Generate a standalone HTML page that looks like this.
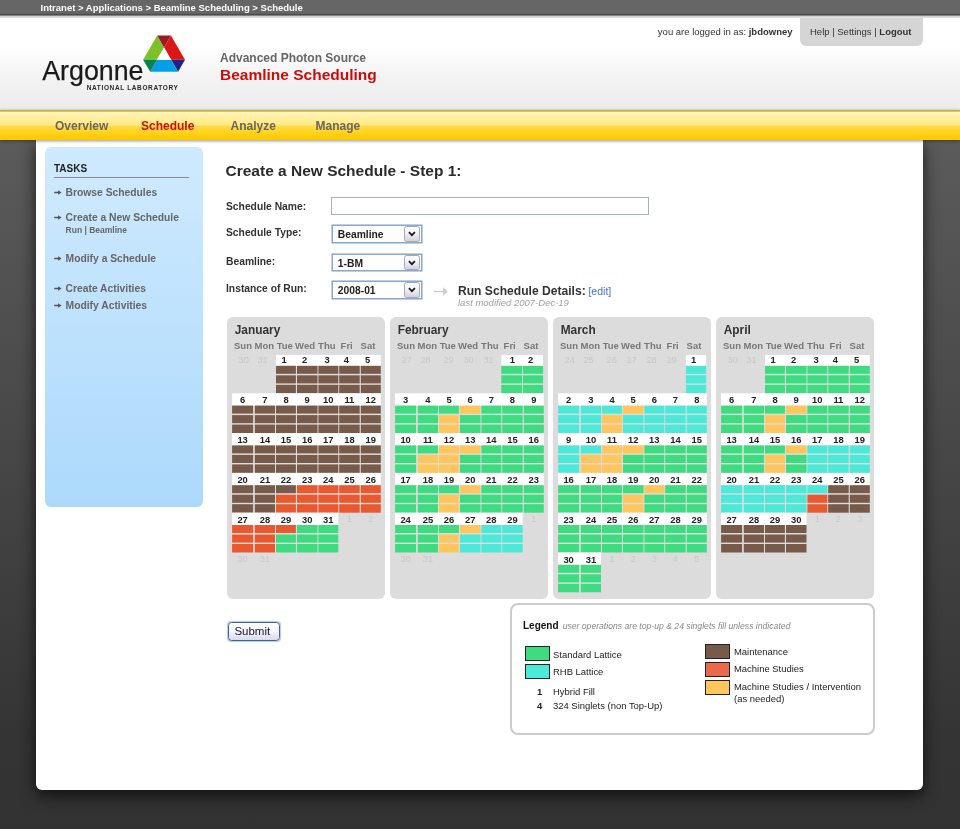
<!DOCTYPE html>
<html lang="en">
<head>
<meta charset="utf-8">
<title>Beamline Scheduling - Create a New Schedule</title>
<style>
*{box-sizing:border-box;margin:0;padding:0}
html,body{width:960px;height:829px;overflow:hidden}
body{font-family:"Liberation Sans",sans-serif;font-size:11px;color:#333;
 background:linear-gradient(to bottom,#5e5e5e 0px,#5b5b5b 140px,#343434 740px,#323232 829px);position:relative}
.abs{position:absolute}
#wrap{position:absolute;left:0;top:0;width:960px;height:829px;will-change:transform}
#topbar{position:absolute;left:0;top:0;width:960px;height:18px;z-index:2;background:linear-gradient(to bottom,#666 0,#666 13px,#606060 13px,#606060 14px,#4c4c4c 14px,#4c4c4c 15px,#828282 15px,#828282 16px,#d0d0d0 16px,#d0d0d0 17px,#dedede 17px,#dedede 18px)}
#topbar span{position:absolute;left:40.5px;top:0.7px;font-size:9.5px;font-weight:bold;color:#fff;line-height:13px;white-space:nowrap}
#header{position:absolute;left:0;top:17px;width:960px;height:93px;background:linear-gradient(to bottom,#fff 0,#fff 29px,#f4f4f4 58px,#ebebeb 93px)}
#nav{position:absolute;left:0;top:110px;width:960px;height:29.5px;
 background:linear-gradient(to bottom,#d3b340 0,#c9a728 1px,#e8cf6a 1.7px,#fff6c2 2.3px,#fff2b0 4px,#ffe981 15.3px,#ffdb42 16px,#ffd425 22px,#ffcb06 27px,#fdc900 29.5px);z-index:3;box-shadow:0 1px 3px rgba(10,15,50,.45)}
#nav span{position:absolute;top:9.3px;font-size:12px;font-weight:bold;color:#666;line-height:15px}
#panel{position:absolute;left:36.3px;top:139.5px;width:887px;height:650.2px;background:#fff;border-radius:0 0 6px 6px;
 box-shadow:0 5px 16px rgba(0,0,0,.72)}
#side{position:absolute;left:45px;top:147px;width:158px;height:360px;border-radius:6px;
 background:linear-gradient(to bottom,#cfeaff 0,#acd9fb 100%)}
#side .t{position:absolute;left:20.6px;font-weight:bold;color:#666;font-size:10.3px;line-height:13px;white-space:nowrap}
#side .t .ar{position:absolute;left:-11.6px;top:4.1px}
.cal{position:absolute;top:317px;width:158px;height:281.7px;background:#dcdcdc;border-radius:6px}
.mn{position:absolute;left:7.7px;top:6.3px;font-size:11.9px;font-weight:bold;color:#333;line-height:15px}
.dow{position:absolute;left:5px;top:23px;width:149px;height:12px}
.dow span{position:absolute;top:0;font-size:9.5px;font-weight:bold;color:#777;line-height:12px;white-space:nowrap}
.cg{position:absolute;left:0;top:0}
.nm b{position:absolute;width:20px;height:12.4px;font-size:9.4px;line-height:13.3px;text-align:center;color:#222;white-space:nowrap}
.nm b.g{color:#c8c8c8;font-weight:normal;font-size:9.2px;line-height:13.6px}
.lbl{position:absolute;left:226px;font-weight:bold;font-size:10.3px;color:#333;line-height:13px;white-space:nowrap}
.sel{position:absolute;left:331px;width:92px;height:19.5px;border:1px solid #bccfe6;background:#fff;box-shadow:inset 0 0 0 1px #8aa8cd;border-radius:1px}
.sel span{position:absolute;left:5.8px;top:3.2px;font-weight:bold;font-size:10.3px;line-height:13px;color:#222}
.sel em{position:absolute;left:71.8px;top:1px;width:16.5px;height:15.5px;border:1px solid #a9a9ae;border-radius:2.5px;
 background:linear-gradient(to bottom,#ffffff 0,#f1f2f7 45%,#cfd2e4 100%)}
.sel em svg{position:absolute;left:3.6px;top:4.2px}
</style>
</head>
<body>
<div id="wrap">
<div id="topbar"><span>Intranet &gt; Applications &gt; Beamline Scheduling &gt; Schedule</span></div>
<div id="header">
 <div class="abs" style="left:42.2px;top:39.2px;font-size:26.8px;line-height:30px;letter-spacing:0;color:#1a1a1a;-webkit-text-stroke:0.25px #1a1a1a;white-space:nowrap">Argonne</div>
 <div class="abs" style="left:86.7px;top:66.7px;font-size:6.5px;line-height:8px;font-weight:bold;letter-spacing:0.63px;color:#2a2a2a;white-space:nowrap">NATIONAL LABORATORY</div>
 <svg class="abs" style="left:140px;top:15px" width="50" height="45" viewBox="140 32 50 45">
  <polygon points="157.2,35.6 164.1,47.4 156.9,59.75 143.1,59.75" fill="#7dc12a"/>
  <polygon points="157.2,35.6 170.9,35.6 164.1,47.4" fill="#9c1a28"/>
  <polygon points="170.9,35.6 185,59.75 171.1,59.75 164.1,47.4" fill="#dc1616"/>
  <polygon points="185,59.75 178.1,71.75 171.1,59.75" fill="#1c2484"/>
  <polygon points="156.9,59.75 171.1,59.75 178.1,71.75 150.3,71.75" fill="#009fe8"/>
  <polygon points="143.1,59.75 156.9,59.75 150.3,71.75" fill="#04824c"/>
  <polygon points="164.1,47.4 171.1,59.75 156.9,59.75" fill="#ffffff"/>
 </svg>
 <div class="abs" style="left:220px;top:33.5px;font-size:12px;font-weight:bold;color:#666;line-height:15px;white-space:nowrap">Advanced Photon Source</div>
 <div class="abs" style="left:220px;top:48px;font-size:15.5px;font-weight:bold;color:#cb0d0a;line-height:19px;white-space:nowrap">Beamline Scheduling</div>
 <div class="abs" style="right:167.5px;top:7.8px;font-size:9.5px;color:#333;line-height:13px;white-space:nowrap">you are logged in as: <b>jbdowney</b></div>
 <div class="abs" style="left:800px;top:0;width:123px;height:29px;background:#d5d5d5;border-radius:0 0 6px 6px"></div>
 <div class="abs" style="left:810px;top:7.8px;font-size:9.5px;color:#333;line-height:13px;white-space:nowrap">Help | Settings | <b>Logout</b></div>
</div>
<div class="abs" style="left:0;top:109px;width:960px;height:1px;background:#e3e6f0"></div>
<div id="nav">
 <span style="left:55px">Overview</span>
 <span style="left:141px;color:#cb0d0a">Schedule</span>
 <span style="left:230.5px">Analyze</span>
 <span style="left:315.5px">Manage</span>
</div>
<div id="panel"></div>
<div id="side">
 <div class="t" style="top:15px;left:9px;color:#222;font-size:10px">TASKS</div>
 <div class="abs" style="left:9px;top:29.6px;width:135px;height:1.2px;background:#8c8c8c"></div>
 <div class="t" style="top:39px"><svg class="ar" width="8" height="5" viewBox="0 0 8 5"><path d="M0.2 2.5H5" stroke="#555" stroke-width="1.5" fill="none"/><path d="M4.2 0.2L7.5 2.5L4.2 4.8Z" fill="#505050"/></svg>Browse Schedules</div>
 <div class="t" style="top:64px"><svg class="ar" width="8" height="5" viewBox="0 0 8 5"><path d="M0.2 2.5H5" stroke="#555" stroke-width="1.5" fill="none"/><path d="M4.2 0.2L7.5 2.5L4.2 4.8Z" fill="#505050"/></svg>Create a New Schedule</div>
 <div class="t" style="top:78px;left:20.6px;font-size:8.5px;line-height:11px">Run | Beamline</div>
 <div class="t" style="top:105px"><svg class="ar" width="8" height="5" viewBox="0 0 8 5"><path d="M0.2 2.5H5" stroke="#555" stroke-width="1.5" fill="none"/><path d="M4.2 0.2L7.5 2.5L4.2 4.8Z" fill="#505050"/></svg>Modify a Schedule</div>
 <div class="t" style="top:134.7px"><svg class="ar" width="8" height="5" viewBox="0 0 8 5"><path d="M0.2 2.5H5" stroke="#555" stroke-width="1.5" fill="none"/><path d="M4.2 0.2L7.5 2.5L4.2 4.8Z" fill="#505050"/></svg>Create Activities</div>
 <div class="t" style="top:152px"><svg class="ar" width="8" height="5" viewBox="0 0 8 5"><path d="M0.2 2.5H5" stroke="#555" stroke-width="1.5" fill="none"/><path d="M4.2 0.2L7.5 2.5L4.2 4.8Z" fill="#505050"/></svg>Modify Activities</div>
</div>

<div class="abs" style="left:225.5px;top:161px;font-size:15.5px;font-weight:bold;color:#2b2b2b;line-height:20px;white-space:nowrap">Create a New Schedule - Step 1:</div>
<div class="lbl" style="top:200px">Schedule Name:</div>
<div class="lbl" style="top:226px">Schedule Type:</div>
<div class="lbl" style="top:255px">Beamline:</div>
<div class="lbl" style="top:282px">Instance of Run:</div>
<div class="abs" style="left:331px;top:197px;width:318px;height:18.3px;border:1px solid #a3b2c4;background:#fff"></div>
<div class="sel" style="top:224px"><span>Beamline</span><em><svg width="8" height="6" viewBox="0 0 8 6"><path d="M0.9 1.1L3.9 4.2L6.9 1.1" stroke="#1a1a1a" stroke-width="1.7" fill="none"/></svg></em></div>
<div class="sel" style="top:252.8px"><span>1-BM</span><em><svg width="8" height="6" viewBox="0 0 8 6"><path d="M0.9 1.1L3.9 4.2L6.9 1.1" stroke="#1a1a1a" stroke-width="1.7" fill="none"/></svg></em></div>
<div class="sel" style="top:280.3px"><span>2008-01</span><em><svg width="8" height="6" viewBox="0 0 8 6"><path d="M0.9 1.1L3.9 4.2L6.9 1.1" stroke="#1a1a1a" stroke-width="1.7" fill="none"/></svg></em></div>
<svg class="abs" style="left:433px;top:287px" width="16" height="9" viewBox="0 0 16 9"><path d="M0.9 4.5H10.6" stroke="#c9c9c9" stroke-width="1.2" fill="none"/><path d="M10.2 0.2L14.8 4.5L10.2 8.9Z" fill="#cbcbcb"/></svg>
<div class="abs" style="left:458px;top:283.4px;font-size:12.1px;font-weight:bold;color:#333;line-height:16px;white-space:nowrap">Run Schedule Details: <span style="font-size:10.5px;font-weight:normal;color:#3d72d8;margin-left:-0.6px">[edit]</span></div>
<div class="abs" style="left:458px;top:297.4px;font-size:9.5px;font-style:italic;color:#a2a2a2;line-height:11px;white-space:nowrap">last modified 2007-Dec-19</div>

<div class="cal" style="left:227px">
<div class="mn">January</div>
<div class="dow">
<span style="left:2px">Sun</span>
<span style="left:22.6px">Mon</span>
<span style="left:44.7px">Tue</span>
<span style="left:63.1px">Wed</span>
<span style="left:86.1px">Thu</span>
<span style="left:108.6px">Fri</span>
<span style="left:128.6px">Sat</span>
</div>
<svg class="cg" width="158" height="282" viewBox="0 0 158 282"><rect x="49.0" y="37.9" width="104.8" height="11.0" fill="#fff"/><rect x="49.0" y="48.8" width="19.9" height="8.0" fill="#775a4a"/><rect x="49.0" y="58.3" width="19.9" height="8.1" fill="#775a4a"/><rect x="49.0" y="67.8" width="19.9" height="8.5" fill="#775a4a"/><rect x="70.0" y="48.8" width="20.5" height="8.0" fill="#775a4a"/><rect x="70.0" y="58.3" width="20.5" height="8.1" fill="#775a4a"/><rect x="70.0" y="67.8" width="20.5" height="8.5" fill="#775a4a"/><rect x="91.4" y="48.8" width="19.9" height="8.0" fill="#775a4a"/><rect x="91.4" y="58.3" width="19.9" height="8.1" fill="#775a4a"/><rect x="91.4" y="67.8" width="19.9" height="8.5" fill="#775a4a"/><rect x="112.2" y="48.8" width="20.5" height="8.0" fill="#775a4a"/><rect x="112.2" y="58.3" width="20.5" height="8.1" fill="#775a4a"/><rect x="112.2" y="67.8" width="20.5" height="8.5" fill="#775a4a"/><rect x="133.8" y="48.8" width="20.0" height="8.0" fill="#775a4a"/><rect x="133.8" y="58.3" width="20.0" height="8.1" fill="#775a4a"/><rect x="133.8" y="67.8" width="20.0" height="8.5" fill="#775a4a"/><rect x="5.1" y="76.3" width="148.7" height="12.4" fill="#fff"/><rect x="5.1" y="88.6" width="21.0" height="8.0" fill="#775a4a"/><rect x="5.1" y="98.1" width="21.0" height="8.1" fill="#775a4a"/><rect x="5.1" y="107.6" width="21.0" height="8.5" fill="#775a4a"/><rect x="27.8" y="88.6" width="20.2" height="8.0" fill="#775a4a"/><rect x="27.8" y="98.1" width="20.2" height="8.1" fill="#775a4a"/><rect x="27.8" y="107.6" width="20.2" height="8.5" fill="#775a4a"/><rect x="49.0" y="88.6" width="19.9" height="8.0" fill="#775a4a"/><rect x="49.0" y="98.1" width="19.9" height="8.1" fill="#775a4a"/><rect x="49.0" y="107.6" width="19.9" height="8.5" fill="#775a4a"/><rect x="70.0" y="88.6" width="20.5" height="8.0" fill="#775a4a"/><rect x="70.0" y="98.1" width="20.5" height="8.1" fill="#775a4a"/><rect x="70.0" y="107.6" width="20.5" height="8.5" fill="#775a4a"/><rect x="91.4" y="88.6" width="19.9" height="8.0" fill="#775a4a"/><rect x="91.4" y="98.1" width="19.9" height="8.1" fill="#775a4a"/><rect x="91.4" y="107.6" width="19.9" height="8.5" fill="#775a4a"/><rect x="112.2" y="88.6" width="20.5" height="8.0" fill="#775a4a"/><rect x="112.2" y="98.1" width="20.5" height="8.1" fill="#775a4a"/><rect x="112.2" y="107.6" width="20.5" height="8.5" fill="#775a4a"/><rect x="133.8" y="88.6" width="20.0" height="8.0" fill="#775a4a"/><rect x="133.8" y="98.1" width="20.0" height="8.1" fill="#775a4a"/><rect x="133.8" y="107.6" width="20.0" height="8.5" fill="#775a4a"/><rect x="5.1" y="116.1" width="148.7" height="12.4" fill="#fff"/><rect x="5.1" y="128.4" width="21.0" height="8.0" fill="#775a4a"/><rect x="5.1" y="137.9" width="21.0" height="8.1" fill="#775a4a"/><rect x="5.1" y="147.4" width="21.0" height="8.5" fill="#775a4a"/><rect x="27.8" y="128.4" width="20.2" height="8.0" fill="#775a4a"/><rect x="27.8" y="137.9" width="20.2" height="8.1" fill="#775a4a"/><rect x="27.8" y="147.4" width="20.2" height="8.5" fill="#775a4a"/><rect x="49.0" y="128.4" width="19.9" height="8.0" fill="#775a4a"/><rect x="49.0" y="137.9" width="19.9" height="8.1" fill="#775a4a"/><rect x="49.0" y="147.4" width="19.9" height="8.5" fill="#775a4a"/><rect x="70.0" y="128.4" width="20.5" height="8.0" fill="#775a4a"/><rect x="70.0" y="137.9" width="20.5" height="8.1" fill="#775a4a"/><rect x="70.0" y="147.4" width="20.5" height="8.5" fill="#775a4a"/><rect x="91.4" y="128.4" width="19.9" height="8.0" fill="#775a4a"/><rect x="91.4" y="137.9" width="19.9" height="8.1" fill="#775a4a"/><rect x="91.4" y="147.4" width="19.9" height="8.5" fill="#775a4a"/><rect x="112.2" y="128.4" width="20.5" height="8.0" fill="#775a4a"/><rect x="112.2" y="137.9" width="20.5" height="8.1" fill="#775a4a"/><rect x="112.2" y="147.4" width="20.5" height="8.5" fill="#775a4a"/><rect x="133.8" y="128.4" width="20.0" height="8.0" fill="#775a4a"/><rect x="133.8" y="137.9" width="20.0" height="8.1" fill="#775a4a"/><rect x="133.8" y="147.4" width="20.0" height="8.5" fill="#775a4a"/><rect x="5.1" y="155.9" width="148.7" height="12.4" fill="#fff"/><rect x="5.1" y="168.2" width="21.0" height="8.0" fill="#775a4a"/><rect x="5.1" y="177.7" width="21.0" height="8.1" fill="#775a4a"/><rect x="5.1" y="187.2" width="21.0" height="8.5" fill="#775a4a"/><rect x="27.8" y="168.2" width="20.2" height="8.0" fill="#775a4a"/><rect x="27.8" y="177.7" width="20.2" height="8.1" fill="#775a4a"/><rect x="27.8" y="187.2" width="20.2" height="8.5" fill="#775a4a"/><rect x="49.0" y="168.2" width="19.9" height="8.0" fill="#775a4a"/><rect x="49.0" y="177.7" width="19.9" height="8.1" fill="#ea5830"/><rect x="49.0" y="187.2" width="19.9" height="8.5" fill="#ea5830"/><rect x="70.0" y="168.2" width="20.5" height="8.0" fill="#ea5830"/><rect x="70.0" y="177.7" width="20.5" height="8.1" fill="#ea5830"/><rect x="70.0" y="187.2" width="20.5" height="8.5" fill="#ea5830"/><rect x="91.4" y="168.2" width="19.9" height="8.0" fill="#ea5830"/><rect x="91.4" y="177.7" width="19.9" height="8.1" fill="#ea5830"/><rect x="91.4" y="187.2" width="19.9" height="8.5" fill="#ea5830"/><rect x="112.2" y="168.2" width="20.5" height="8.0" fill="#ea5830"/><rect x="112.2" y="177.7" width="20.5" height="8.1" fill="#ea5830"/><rect x="112.2" y="187.2" width="20.5" height="8.5" fill="#ea5830"/><rect x="133.8" y="168.2" width="20.0" height="8.0" fill="#ea5830"/><rect x="133.8" y="177.7" width="20.0" height="8.1" fill="#ea5830"/><rect x="133.8" y="187.2" width="20.0" height="8.5" fill="#ea5830"/><rect x="5.1" y="195.7" width="106.2" height="12.4" fill="#fff"/><rect x="5.1" y="208.0" width="21.0" height="8.0" fill="#ea5830"/><rect x="5.1" y="217.5" width="21.0" height="8.1" fill="#ea5830"/><rect x="5.1" y="227.0" width="21.0" height="8.5" fill="#ea5830"/><rect x="27.8" y="208.0" width="20.2" height="8.0" fill="#ea5830"/><rect x="27.8" y="217.5" width="20.2" height="8.1" fill="#ea5830"/><rect x="27.8" y="227.0" width="20.2" height="8.5" fill="#ea5830"/><rect x="49.0" y="208.0" width="19.9" height="8.0" fill="#ea5830"/><rect x="49.0" y="217.5" width="19.9" height="8.1" fill="#3fdb80"/><rect x="49.0" y="227.0" width="19.9" height="8.5" fill="#3fdb80"/><rect x="70.0" y="208.0" width="20.5" height="8.0" fill="#3fdb80"/><rect x="70.0" y="217.5" width="20.5" height="8.1" fill="#3fdb80"/><rect x="70.0" y="227.0" width="20.5" height="8.5" fill="#3fdb80"/><rect x="91.4" y="208.0" width="19.9" height="8.0" fill="#3fdb80"/><rect x="91.4" y="217.5" width="19.9" height="8.1" fill="#3fdb80"/><rect x="91.4" y="227.0" width="19.9" height="8.5" fill="#3fdb80"/></svg>
<div class="nm"><b class="g" style="left:6.7px;top:36.5px">30</b><b class="g" style="left:25.5px;top:36.5px">31</b><b style="left:47.2px;top:35.5px">1</b><b style="left:67.5px;top:35.5px">2</b><b style="left:90.2px;top:35.5px">3</b><b style="left:109.3px;top:35.5px">4</b><b style="left:130.7px;top:35.5px">5</b><b style="left:5.6px;top:76.3px">6</b><b style="left:27.9px;top:76.3px">7</b><b style="left:49.0px;top:76.3px">8</b><b style="left:70.2px;top:76.3px">9</b><b style="left:91.3px;top:76.3px">10</b><b style="left:112.4px;top:76.3px">11</b><b style="left:133.8px;top:76.3px">12</b><b style="left:5.6px;top:116.1px">13</b><b style="left:27.9px;top:116.1px">14</b><b style="left:49.0px;top:116.1px">15</b><b style="left:70.2px;top:116.1px">16</b><b style="left:91.3px;top:116.1px">17</b><b style="left:112.4px;top:116.1px">18</b><b style="left:133.8px;top:116.1px">19</b><b style="left:5.6px;top:155.9px">20</b><b style="left:27.9px;top:155.9px">21</b><b style="left:49.0px;top:155.9px">22</b><b style="left:70.2px;top:155.9px">23</b><b style="left:91.3px;top:155.9px">24</b><b style="left:112.4px;top:155.9px">25</b><b style="left:133.8px;top:155.9px">26</b><b style="left:5.6px;top:195.7px">27</b><b style="left:27.9px;top:195.7px">28</b><b style="left:49.0px;top:195.7px">29</b><b style="left:70.2px;top:195.7px">30</b><b style="left:91.3px;top:195.7px">31</b><b class="g" style="left:112.4px;top:195.7px">1</b><b class="g" style="left:133.8px;top:195.7px">2</b><b class="g" style="left:5.6px;top:235.5px">30</b><b class="g" style="left:27.9px;top:235.5px">31</b></div>
</div>
<div class="cal" style="left:390px">
<div class="mn">February</div>
<div class="dow">
<span style="left:2px">Sun</span>
<span style="left:22.6px">Mon</span>
<span style="left:44.7px">Tue</span>
<span style="left:63.1px">Wed</span>
<span style="left:86.1px">Thu</span>
<span style="left:108.6px">Fri</span>
<span style="left:128.6px">Sat</span>
</div>
<svg class="cg" width="158" height="282" viewBox="0 0 158 282"><rect x="111.3" y="37.9" width="41.8" height="11.0" fill="#fff"/><rect x="111.3" y="48.8" width="20.7" height="8.0" fill="#3fdb80"/><rect x="111.3" y="58.3" width="20.7" height="8.1" fill="#3fdb80"/><rect x="111.3" y="67.8" width="20.7" height="8.5" fill="#3fdb80"/><rect x="132.9" y="48.8" width="20.2" height="8.0" fill="#3fdb80"/><rect x="132.9" y="58.3" width="20.2" height="8.1" fill="#3fdb80"/><rect x="132.9" y="67.8" width="20.2" height="8.5" fill="#3fdb80"/><rect x="5.1" y="76.3" width="148.7" height="12.4" fill="#fff"/><rect x="5.1" y="88.6" width="21.0" height="8.0" fill="#3fdb80"/><rect x="5.1" y="98.1" width="21.0" height="8.1" fill="#3fdb80"/><rect x="5.1" y="107.6" width="21.0" height="8.5" fill="#3fdb80"/><rect x="27.8" y="88.6" width="20.2" height="8.0" fill="#3fdb80"/><rect x="27.8" y="98.1" width="20.2" height="8.1" fill="#3fdb80"/><rect x="27.8" y="107.6" width="20.2" height="8.5" fill="#3fdb80"/><rect x="49.0" y="88.6" width="19.9" height="8.0" fill="#3fdb80"/><rect x="49.0" y="98.1" width="19.9" height="8.1" fill="#ffc65e"/><rect x="49.0" y="107.6" width="19.9" height="8.5" fill="#ffc65e"/><rect x="70.0" y="88.6" width="20.5" height="8.0" fill="#ffc65e"/><rect x="70.0" y="98.1" width="20.5" height="8.1" fill="#3fdb80"/><rect x="70.0" y="107.6" width="20.5" height="8.5" fill="#3fdb80"/><rect x="91.4" y="88.6" width="19.9" height="8.0" fill="#3fdb80"/><rect x="91.4" y="98.1" width="19.9" height="8.1" fill="#3fdb80"/><rect x="91.4" y="107.6" width="19.9" height="8.5" fill="#3fdb80"/><rect x="112.2" y="88.6" width="20.5" height="8.0" fill="#3fdb80"/><rect x="112.2" y="98.1" width="20.5" height="8.1" fill="#3fdb80"/><rect x="112.2" y="107.6" width="20.5" height="8.5" fill="#3fdb80"/><rect x="133.8" y="88.6" width="20.0" height="8.0" fill="#3fdb80"/><rect x="133.8" y="98.1" width="20.0" height="8.1" fill="#3fdb80"/><rect x="133.8" y="107.6" width="20.0" height="8.5" fill="#3fdb80"/><rect x="5.1" y="116.1" width="148.7" height="12.4" fill="#fff"/><rect x="5.1" y="128.4" width="21.0" height="8.0" fill="#3fdb80"/><rect x="5.1" y="137.9" width="21.0" height="8.1" fill="#3fdb80"/><rect x="5.1" y="147.4" width="21.0" height="8.5" fill="#3fdb80"/><rect x="27.8" y="128.4" width="20.2" height="8.0" fill="#3fdb80"/><rect x="27.8" y="137.9" width="20.2" height="8.1" fill="#ffc65e"/><rect x="27.8" y="147.4" width="20.2" height="8.5" fill="#ffc65e"/><rect x="49.0" y="128.4" width="19.9" height="8.0" fill="#ffc65e"/><rect x="49.0" y="137.9" width="19.9" height="8.1" fill="#ffc65e"/><rect x="49.0" y="147.4" width="19.9" height="8.5" fill="#ffc65e"/><rect x="70.0" y="128.4" width="20.5" height="8.0" fill="#ffc65e"/><rect x="70.0" y="137.9" width="20.5" height="8.1" fill="#3fdb80"/><rect x="70.0" y="147.4" width="20.5" height="8.5" fill="#3fdb80"/><rect x="91.4" y="128.4" width="19.9" height="8.0" fill="#3fdb80"/><rect x="91.4" y="137.9" width="19.9" height="8.1" fill="#3fdb80"/><rect x="91.4" y="147.4" width="19.9" height="8.5" fill="#3fdb80"/><rect x="112.2" y="128.4" width="20.5" height="8.0" fill="#3fdb80"/><rect x="112.2" y="137.9" width="20.5" height="8.1" fill="#3fdb80"/><rect x="112.2" y="147.4" width="20.5" height="8.5" fill="#3fdb80"/><rect x="133.8" y="128.4" width="20.0" height="8.0" fill="#3fdb80"/><rect x="133.8" y="137.9" width="20.0" height="8.1" fill="#3fdb80"/><rect x="133.8" y="147.4" width="20.0" height="8.5" fill="#3fdb80"/><rect x="5.1" y="155.9" width="148.7" height="12.4" fill="#fff"/><rect x="5.1" y="168.2" width="21.0" height="8.0" fill="#3fdb80"/><rect x="5.1" y="177.7" width="21.0" height="8.1" fill="#3fdb80"/><rect x="5.1" y="187.2" width="21.0" height="8.5" fill="#3fdb80"/><rect x="27.8" y="168.2" width="20.2" height="8.0" fill="#3fdb80"/><rect x="27.8" y="177.7" width="20.2" height="8.1" fill="#3fdb80"/><rect x="27.8" y="187.2" width="20.2" height="8.5" fill="#3fdb80"/><rect x="49.0" y="168.2" width="19.9" height="8.0" fill="#3fdb80"/><rect x="49.0" y="177.7" width="19.9" height="8.1" fill="#ffc65e"/><rect x="49.0" y="187.2" width="19.9" height="8.5" fill="#ffc65e"/><rect x="70.0" y="168.2" width="20.5" height="8.0" fill="#ffc65e"/><rect x="70.0" y="177.7" width="20.5" height="8.1" fill="#3fdb80"/><rect x="70.0" y="187.2" width="20.5" height="8.5" fill="#3fdb80"/><rect x="91.4" y="168.2" width="19.9" height="8.0" fill="#3fdb80"/><rect x="91.4" y="177.7" width="19.9" height="8.1" fill="#3fdb80"/><rect x="91.4" y="187.2" width="19.9" height="8.5" fill="#3fdb80"/><rect x="112.2" y="168.2" width="20.5" height="8.0" fill="#3fdb80"/><rect x="112.2" y="177.7" width="20.5" height="8.1" fill="#3fdb80"/><rect x="112.2" y="187.2" width="20.5" height="8.5" fill="#3fdb80"/><rect x="133.8" y="168.2" width="20.0" height="8.0" fill="#3fdb80"/><rect x="133.8" y="177.7" width="20.0" height="8.1" fill="#3fdb80"/><rect x="133.8" y="187.2" width="20.0" height="8.5" fill="#3fdb80"/><rect x="5.1" y="195.7" width="127.6" height="12.4" fill="#fff"/><rect x="5.1" y="208.0" width="21.0" height="8.0" fill="#3fdb80"/><rect x="5.1" y="217.5" width="21.0" height="8.1" fill="#3fdb80"/><rect x="5.1" y="227.0" width="21.0" height="8.5" fill="#3fdb80"/><rect x="27.8" y="208.0" width="20.2" height="8.0" fill="#3fdb80"/><rect x="27.8" y="217.5" width="20.2" height="8.1" fill="#3fdb80"/><rect x="27.8" y="227.0" width="20.2" height="8.5" fill="#3fdb80"/><rect x="49.0" y="208.0" width="19.9" height="8.0" fill="#3fdb80"/><rect x="49.0" y="217.5" width="19.9" height="8.1" fill="#ffc65e"/><rect x="49.0" y="227.0" width="19.9" height="8.5" fill="#ffc65e"/><rect x="70.0" y="208.0" width="20.5" height="8.0" fill="#ffc65e"/><rect x="70.0" y="217.5" width="20.5" height="8.1" fill="#4ce8d8"/><rect x="70.0" y="227.0" width="20.5" height="8.5" fill="#4ce8d8"/><rect x="91.4" y="208.0" width="19.9" height="8.0" fill="#4ce8d8"/><rect x="91.4" y="217.5" width="19.9" height="8.1" fill="#4ce8d8"/><rect x="91.4" y="227.0" width="19.9" height="8.5" fill="#4ce8d8"/><rect x="112.2" y="208.0" width="20.5" height="8.0" fill="#4ce8d8"/><rect x="112.2" y="217.5" width="20.5" height="8.1" fill="#4ce8d8"/><rect x="112.2" y="227.0" width="20.5" height="8.5" fill="#4ce8d8"/></svg>
<div class="nm"><b class="g" style="left:6.7px;top:36.5px">27</b><b class="g" style="left:25.5px;top:36.5px">28</b><b class="g" style="left:48.7px;top:36.5px">29</b><b class="g" style="left:68.5px;top:36.5px">30</b><b class="g" style="left:88.5px;top:36.5px">31</b><b style="left:112.4px;top:35.5px">1</b><b style="left:130.7px;top:35.5px">2</b><b style="left:5.6px;top:76.3px">3</b><b style="left:27.9px;top:76.3px">4</b><b style="left:49.0px;top:76.3px">5</b><b style="left:70.2px;top:76.3px">6</b><b style="left:91.3px;top:76.3px">7</b><b style="left:112.4px;top:76.3px">8</b><b style="left:133.8px;top:76.3px">9</b><b style="left:5.6px;top:116.1px">10</b><b style="left:27.9px;top:116.1px">11</b><b style="left:49.0px;top:116.1px">12</b><b style="left:70.2px;top:116.1px">13</b><b style="left:91.3px;top:116.1px">14</b><b style="left:112.4px;top:116.1px">15</b><b style="left:133.8px;top:116.1px">16</b><b style="left:5.6px;top:155.9px">17</b><b style="left:27.9px;top:155.9px">18</b><b style="left:49.0px;top:155.9px">19</b><b style="left:70.2px;top:155.9px">20</b><b style="left:91.3px;top:155.9px">21</b><b style="left:112.4px;top:155.9px">22</b><b style="left:133.8px;top:155.9px">23</b><b style="left:5.6px;top:195.7px">24</b><b style="left:27.9px;top:195.7px">25</b><b style="left:49.0px;top:195.7px">26</b><b style="left:70.2px;top:195.7px">27</b><b style="left:91.3px;top:195.7px">28</b><b style="left:112.4px;top:195.7px">29</b><b class="g" style="left:133.8px;top:195.7px">1</b><b class="g" style="left:5.6px;top:235.5px">30</b><b class="g" style="left:27.9px;top:235.5px">31</b></div>
</div>
<div class="cal" style="left:553px">
<div class="mn">March</div>
<div class="dow">
<span style="left:2px">Sun</span>
<span style="left:22.6px">Mon</span>
<span style="left:44.7px">Tue</span>
<span style="left:63.1px">Wed</span>
<span style="left:86.1px">Thu</span>
<span style="left:108.6px">Fri</span>
<span style="left:128.6px">Sat</span>
</div>
<svg class="cg" width="158" height="282" viewBox="0 0 158 282"><rect x="132.9" y="37.9" width="20.2" height="11.0" fill="#fff"/><rect x="132.9" y="48.8" width="20.2" height="8.0" fill="#4ce8d8"/><rect x="132.9" y="58.3" width="20.2" height="8.1" fill="#4ce8d8"/><rect x="132.9" y="67.8" width="20.2" height="8.5" fill="#4ce8d8"/><rect x="5.1" y="76.3" width="148.7" height="12.4" fill="#fff"/><rect x="5.1" y="88.6" width="21.0" height="8.0" fill="#4ce8d8"/><rect x="5.1" y="98.1" width="21.0" height="8.1" fill="#4ce8d8"/><rect x="5.1" y="107.6" width="21.0" height="8.5" fill="#4ce8d8"/><rect x="27.8" y="88.6" width="20.2" height="8.0" fill="#4ce8d8"/><rect x="27.8" y="98.1" width="20.2" height="8.1" fill="#4ce8d8"/><rect x="27.8" y="107.6" width="20.2" height="8.5" fill="#4ce8d8"/><rect x="49.0" y="88.6" width="19.9" height="8.0" fill="#4ce8d8"/><rect x="49.0" y="98.1" width="19.9" height="8.1" fill="#ffc65e"/><rect x="49.0" y="107.6" width="19.9" height="8.5" fill="#ffc65e"/><rect x="70.0" y="88.6" width="20.5" height="8.0" fill="#ffc65e"/><rect x="70.0" y="98.1" width="20.5" height="8.1" fill="#4ce8d8"/><rect x="70.0" y="107.6" width="20.5" height="8.5" fill="#4ce8d8"/><rect x="91.4" y="88.6" width="19.9" height="8.0" fill="#4ce8d8"/><rect x="91.4" y="98.1" width="19.9" height="8.1" fill="#4ce8d8"/><rect x="91.4" y="107.6" width="19.9" height="8.5" fill="#4ce8d8"/><rect x="112.2" y="88.6" width="20.5" height="8.0" fill="#4ce8d8"/><rect x="112.2" y="98.1" width="20.5" height="8.1" fill="#4ce8d8"/><rect x="112.2" y="107.6" width="20.5" height="8.5" fill="#4ce8d8"/><rect x="133.8" y="88.6" width="20.0" height="8.0" fill="#4ce8d8"/><rect x="133.8" y="98.1" width="20.0" height="8.1" fill="#4ce8d8"/><rect x="133.8" y="107.6" width="20.0" height="8.5" fill="#4ce8d8"/><rect x="5.1" y="116.1" width="148.7" height="12.4" fill="#fff"/><rect x="5.1" y="128.4" width="21.0" height="8.0" fill="#4ce8d8"/><rect x="5.1" y="137.9" width="21.0" height="8.1" fill="#4ce8d8"/><rect x="5.1" y="147.4" width="21.0" height="8.5" fill="#4ce8d8"/><rect x="27.8" y="128.4" width="20.2" height="8.0" fill="#4ce8d8"/><rect x="27.8" y="137.9" width="20.2" height="8.1" fill="#ffc65e"/><rect x="27.8" y="147.4" width="20.2" height="8.5" fill="#ffc65e"/><rect x="49.0" y="128.4" width="19.9" height="8.0" fill="#ffc65e"/><rect x="49.0" y="137.9" width="19.9" height="8.1" fill="#ffc65e"/><rect x="49.0" y="147.4" width="19.9" height="8.5" fill="#ffc65e"/><rect x="70.0" y="128.4" width="20.5" height="8.0" fill="#ffc65e"/><rect x="70.0" y="137.9" width="20.5" height="8.1" fill="#3fdb80"/><rect x="70.0" y="147.4" width="20.5" height="8.5" fill="#3fdb80"/><rect x="91.4" y="128.4" width="19.9" height="8.0" fill="#3fdb80"/><rect x="91.4" y="137.9" width="19.9" height="8.1" fill="#3fdb80"/><rect x="91.4" y="147.4" width="19.9" height="8.5" fill="#3fdb80"/><rect x="112.2" y="128.4" width="20.5" height="8.0" fill="#3fdb80"/><rect x="112.2" y="137.9" width="20.5" height="8.1" fill="#3fdb80"/><rect x="112.2" y="147.4" width="20.5" height="8.5" fill="#3fdb80"/><rect x="133.8" y="128.4" width="20.0" height="8.0" fill="#3fdb80"/><rect x="133.8" y="137.9" width="20.0" height="8.1" fill="#3fdb80"/><rect x="133.8" y="147.4" width="20.0" height="8.5" fill="#3fdb80"/><rect x="5.1" y="155.9" width="148.7" height="12.4" fill="#fff"/><rect x="5.1" y="168.2" width="21.0" height="8.0" fill="#3fdb80"/><rect x="5.1" y="177.7" width="21.0" height="8.1" fill="#3fdb80"/><rect x="5.1" y="187.2" width="21.0" height="8.5" fill="#3fdb80"/><rect x="27.8" y="168.2" width="20.2" height="8.0" fill="#3fdb80"/><rect x="27.8" y="177.7" width="20.2" height="8.1" fill="#3fdb80"/><rect x="27.8" y="187.2" width="20.2" height="8.5" fill="#3fdb80"/><rect x="49.0" y="168.2" width="19.9" height="8.0" fill="#3fdb80"/><rect x="49.0" y="177.7" width="19.9" height="8.1" fill="#3fdb80"/><rect x="49.0" y="187.2" width="19.9" height="8.5" fill="#3fdb80"/><rect x="70.0" y="168.2" width="20.5" height="8.0" fill="#3fdb80"/><rect x="70.0" y="177.7" width="20.5" height="8.1" fill="#ffc65e"/><rect x="70.0" y="187.2" width="20.5" height="8.5" fill="#ffc65e"/><rect x="91.4" y="168.2" width="19.9" height="8.0" fill="#ffc65e"/><rect x="91.4" y="177.7" width="19.9" height="8.1" fill="#3fdb80"/><rect x="91.4" y="187.2" width="19.9" height="8.5" fill="#3fdb80"/><rect x="112.2" y="168.2" width="20.5" height="8.0" fill="#3fdb80"/><rect x="112.2" y="177.7" width="20.5" height="8.1" fill="#3fdb80"/><rect x="112.2" y="187.2" width="20.5" height="8.5" fill="#3fdb80"/><rect x="133.8" y="168.2" width="20.0" height="8.0" fill="#3fdb80"/><rect x="133.8" y="177.7" width="20.0" height="8.1" fill="#3fdb80"/><rect x="133.8" y="187.2" width="20.0" height="8.5" fill="#3fdb80"/><rect x="5.1" y="195.7" width="148.7" height="12.4" fill="#fff"/><rect x="5.1" y="208.0" width="21.0" height="8.0" fill="#3fdb80"/><rect x="5.1" y="217.5" width="21.0" height="8.1" fill="#3fdb80"/><rect x="5.1" y="227.0" width="21.0" height="8.5" fill="#3fdb80"/><rect x="27.8" y="208.0" width="20.2" height="8.0" fill="#3fdb80"/><rect x="27.8" y="217.5" width="20.2" height="8.1" fill="#3fdb80"/><rect x="27.8" y="227.0" width="20.2" height="8.5" fill="#3fdb80"/><rect x="49.0" y="208.0" width="19.9" height="8.0" fill="#3fdb80"/><rect x="49.0" y="217.5" width="19.9" height="8.1" fill="#3fdb80"/><rect x="49.0" y="227.0" width="19.9" height="8.5" fill="#3fdb80"/><rect x="70.0" y="208.0" width="20.5" height="8.0" fill="#3fdb80"/><rect x="70.0" y="217.5" width="20.5" height="8.1" fill="#3fdb80"/><rect x="70.0" y="227.0" width="20.5" height="8.5" fill="#3fdb80"/><rect x="91.4" y="208.0" width="19.9" height="8.0" fill="#3fdb80"/><rect x="91.4" y="217.5" width="19.9" height="8.1" fill="#3fdb80"/><rect x="91.4" y="227.0" width="19.9" height="8.5" fill="#3fdb80"/><rect x="112.2" y="208.0" width="20.5" height="8.0" fill="#3fdb80"/><rect x="112.2" y="217.5" width="20.5" height="8.1" fill="#3fdb80"/><rect x="112.2" y="227.0" width="20.5" height="8.5" fill="#3fdb80"/><rect x="133.8" y="208.0" width="20.0" height="8.0" fill="#3fdb80"/><rect x="133.8" y="217.5" width="20.0" height="8.1" fill="#3fdb80"/><rect x="133.8" y="227.0" width="20.0" height="8.5" fill="#3fdb80"/><rect x="5.1" y="235.5" width="42.9" height="12.4" fill="#fff"/><rect x="5.1" y="247.8" width="21.0" height="8.0" fill="#3fdb80"/><rect x="5.1" y="257.3" width="21.0" height="8.1" fill="#3fdb80"/><rect x="5.1" y="266.8" width="21.0" height="8.5" fill="#3fdb80"/><rect x="27.8" y="247.8" width="20.2" height="8.0" fill="#3fdb80"/><rect x="27.8" y="257.3" width="20.2" height="8.1" fill="#3fdb80"/><rect x="27.8" y="266.8" width="20.2" height="8.5" fill="#3fdb80"/></svg>
<div class="nm"><b class="g" style="left:6.7px;top:36.5px">24</b><b class="g" style="left:25.5px;top:36.5px">25</b><b class="g" style="left:48.7px;top:36.5px">26</b><b class="g" style="left:68.5px;top:36.5px">27</b><b class="g" style="left:88.5px;top:36.5px">28</b><b class="g" style="left:108.6px;top:36.5px">29</b><b style="left:130.7px;top:35.5px">1</b><b style="left:5.6px;top:76.3px">2</b><b style="left:27.9px;top:76.3px">3</b><b style="left:49.0px;top:76.3px">4</b><b style="left:70.2px;top:76.3px">5</b><b style="left:91.3px;top:76.3px">6</b><b style="left:112.4px;top:76.3px">7</b><b style="left:133.8px;top:76.3px">8</b><b style="left:5.6px;top:116.1px">9</b><b style="left:27.9px;top:116.1px">10</b><b style="left:49.0px;top:116.1px">11</b><b style="left:70.2px;top:116.1px">12</b><b style="left:91.3px;top:116.1px">13</b><b style="left:112.4px;top:116.1px">14</b><b style="left:133.8px;top:116.1px">15</b><b style="left:5.6px;top:155.9px">16</b><b style="left:27.9px;top:155.9px">17</b><b style="left:49.0px;top:155.9px">18</b><b style="left:70.2px;top:155.9px">19</b><b style="left:91.3px;top:155.9px">20</b><b style="left:112.4px;top:155.9px">21</b><b style="left:133.8px;top:155.9px">22</b><b style="left:5.6px;top:195.7px">23</b><b style="left:27.9px;top:195.7px">24</b><b style="left:49.0px;top:195.7px">25</b><b style="left:70.2px;top:195.7px">26</b><b style="left:91.3px;top:195.7px">27</b><b style="left:112.4px;top:195.7px">28</b><b style="left:133.8px;top:195.7px">29</b><b style="left:5.6px;top:235.5px">30</b><b style="left:27.9px;top:235.5px">31</b><b class="g" style="left:49.0px;top:235.5px">1</b><b class="g" style="left:70.2px;top:235.5px">2</b><b class="g" style="left:91.3px;top:235.5px">3</b><b class="g" style="left:112.4px;top:235.5px">4</b><b class="g" style="left:133.8px;top:235.5px">5</b></div>
</div>
<div class="cal" style="left:716px">
<div class="mn">April</div>
<div class="dow">
<span style="left:2px">Sun</span>
<span style="left:22.6px">Mon</span>
<span style="left:44.7px">Tue</span>
<span style="left:63.1px">Wed</span>
<span style="left:86.1px">Thu</span>
<span style="left:108.6px">Fri</span>
<span style="left:128.6px">Sat</span>
</div>
<svg class="cg" width="158" height="282" viewBox="0 0 158 282"><rect x="49.0" y="37.9" width="104.8" height="11.0" fill="#fff"/><rect x="49.0" y="48.8" width="19.9" height="8.0" fill="#3fdb80"/><rect x="49.0" y="58.3" width="19.9" height="8.1" fill="#3fdb80"/><rect x="49.0" y="67.8" width="19.9" height="8.5" fill="#3fdb80"/><rect x="70.0" y="48.8" width="20.5" height="8.0" fill="#3fdb80"/><rect x="70.0" y="58.3" width="20.5" height="8.1" fill="#3fdb80"/><rect x="70.0" y="67.8" width="20.5" height="8.5" fill="#3fdb80"/><rect x="91.4" y="48.8" width="19.9" height="8.0" fill="#3fdb80"/><rect x="91.4" y="58.3" width="19.9" height="8.1" fill="#3fdb80"/><rect x="91.4" y="67.8" width="19.9" height="8.5" fill="#3fdb80"/><rect x="112.2" y="48.8" width="20.5" height="8.0" fill="#3fdb80"/><rect x="112.2" y="58.3" width="20.5" height="8.1" fill="#3fdb80"/><rect x="112.2" y="67.8" width="20.5" height="8.5" fill="#3fdb80"/><rect x="133.8" y="48.8" width="20.0" height="8.0" fill="#3fdb80"/><rect x="133.8" y="58.3" width="20.0" height="8.1" fill="#3fdb80"/><rect x="133.8" y="67.8" width="20.0" height="8.5" fill="#3fdb80"/><rect x="5.1" y="76.3" width="148.7" height="12.4" fill="#fff"/><rect x="5.1" y="88.6" width="21.0" height="8.0" fill="#3fdb80"/><rect x="5.1" y="98.1" width="21.0" height="8.1" fill="#3fdb80"/><rect x="5.1" y="107.6" width="21.0" height="8.5" fill="#3fdb80"/><rect x="27.8" y="88.6" width="20.2" height="8.0" fill="#3fdb80"/><rect x="27.8" y="98.1" width="20.2" height="8.1" fill="#3fdb80"/><rect x="27.8" y="107.6" width="20.2" height="8.5" fill="#3fdb80"/><rect x="49.0" y="88.6" width="19.9" height="8.0" fill="#3fdb80"/><rect x="49.0" y="98.1" width="19.9" height="8.1" fill="#ffc65e"/><rect x="49.0" y="107.6" width="19.9" height="8.5" fill="#ffc65e"/><rect x="70.0" y="88.6" width="20.5" height="8.0" fill="#ffc65e"/><rect x="70.0" y="98.1" width="20.5" height="8.1" fill="#3fdb80"/><rect x="70.0" y="107.6" width="20.5" height="8.5" fill="#3fdb80"/><rect x="91.4" y="88.6" width="19.9" height="8.0" fill="#3fdb80"/><rect x="91.4" y="98.1" width="19.9" height="8.1" fill="#3fdb80"/><rect x="91.4" y="107.6" width="19.9" height="8.5" fill="#3fdb80"/><rect x="112.2" y="88.6" width="20.5" height="8.0" fill="#3fdb80"/><rect x="112.2" y="98.1" width="20.5" height="8.1" fill="#3fdb80"/><rect x="112.2" y="107.6" width="20.5" height="8.5" fill="#3fdb80"/><rect x="133.8" y="88.6" width="20.0" height="8.0" fill="#3fdb80"/><rect x="133.8" y="98.1" width="20.0" height="8.1" fill="#3fdb80"/><rect x="133.8" y="107.6" width="20.0" height="8.5" fill="#3fdb80"/><rect x="5.1" y="116.1" width="148.7" height="12.4" fill="#fff"/><rect x="5.1" y="128.4" width="21.0" height="8.0" fill="#3fdb80"/><rect x="5.1" y="137.9" width="21.0" height="8.1" fill="#3fdb80"/><rect x="5.1" y="147.4" width="21.0" height="8.5" fill="#3fdb80"/><rect x="27.8" y="128.4" width="20.2" height="8.0" fill="#3fdb80"/><rect x="27.8" y="137.9" width="20.2" height="8.1" fill="#3fdb80"/><rect x="27.8" y="147.4" width="20.2" height="8.5" fill="#3fdb80"/><rect x="49.0" y="128.4" width="19.9" height="8.0" fill="#3fdb80"/><rect x="49.0" y="137.9" width="19.9" height="8.1" fill="#ffc65e"/><rect x="49.0" y="147.4" width="19.9" height="8.5" fill="#ffc65e"/><rect x="70.0" y="128.4" width="20.5" height="8.0" fill="#ffc65e"/><rect x="70.0" y="137.9" width="20.5" height="8.1" fill="#3fdb80"/><rect x="70.0" y="147.4" width="20.5" height="8.5" fill="#3fdb80"/><rect x="91.4" y="128.4" width="19.9" height="8.0" fill="#4ce8d8"/><rect x="91.4" y="137.9" width="19.9" height="8.1" fill="#4ce8d8"/><rect x="91.4" y="147.4" width="19.9" height="8.5" fill="#4ce8d8"/><rect x="112.2" y="128.4" width="20.5" height="8.0" fill="#4ce8d8"/><rect x="112.2" y="137.9" width="20.5" height="8.1" fill="#4ce8d8"/><rect x="112.2" y="147.4" width="20.5" height="8.5" fill="#4ce8d8"/><rect x="133.8" y="128.4" width="20.0" height="8.0" fill="#4ce8d8"/><rect x="133.8" y="137.9" width="20.0" height="8.1" fill="#4ce8d8"/><rect x="133.8" y="147.4" width="20.0" height="8.5" fill="#4ce8d8"/><rect x="5.1" y="155.9" width="148.7" height="12.4" fill="#fff"/><rect x="5.1" y="168.2" width="21.0" height="8.0" fill="#4ce8d8"/><rect x="5.1" y="177.7" width="21.0" height="8.1" fill="#4ce8d8"/><rect x="5.1" y="187.2" width="21.0" height="8.5" fill="#4ce8d8"/><rect x="27.8" y="168.2" width="20.2" height="8.0" fill="#4ce8d8"/><rect x="27.8" y="177.7" width="20.2" height="8.1" fill="#4ce8d8"/><rect x="27.8" y="187.2" width="20.2" height="8.5" fill="#4ce8d8"/><rect x="49.0" y="168.2" width="19.9" height="8.0" fill="#4ce8d8"/><rect x="49.0" y="177.7" width="19.9" height="8.1" fill="#4ce8d8"/><rect x="49.0" y="187.2" width="19.9" height="8.5" fill="#4ce8d8"/><rect x="70.0" y="168.2" width="20.5" height="8.0" fill="#4ce8d8"/><rect x="70.0" y="177.7" width="20.5" height="8.1" fill="#4ce8d8"/><rect x="70.0" y="187.2" width="20.5" height="8.5" fill="#4ce8d8"/><rect x="91.4" y="168.2" width="19.9" height="8.0" fill="#4ce8d8"/><rect x="91.4" y="177.7" width="19.9" height="8.1" fill="#ea5830"/><rect x="91.4" y="187.2" width="19.9" height="8.5" fill="#ea5830"/><rect x="112.2" y="168.2" width="20.5" height="8.0" fill="#775a4a"/><rect x="112.2" y="177.7" width="20.5" height="8.1" fill="#775a4a"/><rect x="112.2" y="187.2" width="20.5" height="8.5" fill="#775a4a"/><rect x="133.8" y="168.2" width="20.0" height="8.0" fill="#775a4a"/><rect x="133.8" y="177.7" width="20.0" height="8.1" fill="#775a4a"/><rect x="133.8" y="187.2" width="20.0" height="8.5" fill="#775a4a"/><rect x="5.1" y="195.7" width="85.4" height="12.4" fill="#fff"/><rect x="5.1" y="208.0" width="21.0" height="8.0" fill="#775a4a"/><rect x="5.1" y="217.5" width="21.0" height="8.1" fill="#775a4a"/><rect x="5.1" y="227.0" width="21.0" height="8.5" fill="#775a4a"/><rect x="27.8" y="208.0" width="20.2" height="8.0" fill="#775a4a"/><rect x="27.8" y="217.5" width="20.2" height="8.1" fill="#775a4a"/><rect x="27.8" y="227.0" width="20.2" height="8.5" fill="#775a4a"/><rect x="49.0" y="208.0" width="19.9" height="8.0" fill="#775a4a"/><rect x="49.0" y="217.5" width="19.9" height="8.1" fill="#775a4a"/><rect x="49.0" y="227.0" width="19.9" height="8.5" fill="#775a4a"/><rect x="70.0" y="208.0" width="20.5" height="8.0" fill="#775a4a"/><rect x="70.0" y="217.5" width="20.5" height="8.1" fill="#775a4a"/><rect x="70.0" y="227.0" width="20.5" height="8.5" fill="#775a4a"/></svg>
<div class="nm"><b class="g" style="left:6.7px;top:36.5px">30</b><b class="g" style="left:25.5px;top:36.5px">31</b><b style="left:47.2px;top:35.5px">1</b><b style="left:67.5px;top:35.5px">2</b><b style="left:90.2px;top:35.5px">3</b><b style="left:109.3px;top:35.5px">4</b><b style="left:130.7px;top:35.5px">5</b><b style="left:5.6px;top:76.3px">6</b><b style="left:27.9px;top:76.3px">7</b><b style="left:49.0px;top:76.3px">8</b><b style="left:70.2px;top:76.3px">9</b><b style="left:91.3px;top:76.3px">10</b><b style="left:112.4px;top:76.3px">11</b><b style="left:133.8px;top:76.3px">12</b><b style="left:5.6px;top:116.1px">13</b><b style="left:27.9px;top:116.1px">14</b><b style="left:49.0px;top:116.1px">15</b><b style="left:70.2px;top:116.1px">16</b><b style="left:91.3px;top:116.1px">17</b><b style="left:112.4px;top:116.1px">18</b><b style="left:133.8px;top:116.1px">19</b><b style="left:5.6px;top:155.9px">20</b><b style="left:27.9px;top:155.9px">21</b><b style="left:49.0px;top:155.9px">22</b><b style="left:70.2px;top:155.9px">23</b><b style="left:91.3px;top:155.9px">24</b><b style="left:112.4px;top:155.9px">25</b><b style="left:133.8px;top:155.9px">26</b><b style="left:5.6px;top:195.7px">27</b><b style="left:27.9px;top:195.7px">28</b><b style="left:49.0px;top:195.7px">29</b><b style="left:70.2px;top:195.7px">30</b><b class="g" style="left:91.3px;top:195.7px">1</b><b class="g" style="left:112.4px;top:195.7px">2</b><b class="g" style="left:133.8px;top:195.7px">3</b></div>
</div>

<div class="abs" style="left:227.5px;top:622.2px;width:52.2px;height:18.8px;border:1.5px solid #3b6596;border-radius:3.5px;background:linear-gradient(to bottom,#fff 0,#f4f4fa 50%,#d9d9ec 100%);box-shadow:0 0 1px 0.5px #b9c8dc;font-size:11.5px;line-height:17.3px;text-align:center;color:#161630;padding-right:2.6px">Submit</div>

<div class="abs" style="left:509.8px;top:602.8px;width:365.3px;height:132.4px;border:2px solid #cbcbcb;border-radius:8px;background:#fff"></div>
<div class="abs" style="left:523px;top:619px;font-size:10px;font-weight:bold;color:#111;line-height:13px;white-space:nowrap">Legend <span style="font-size:8.65px;font-weight:normal;font-style:italic;color:#888;margin-left:1.3px">user operations are top-up &amp; 24 singlets fill unless indicated</span></div>
<div class="abs lg" style="left:525px;top:646px;width:25px;height:15px;border:1px solid #222;background:#3fdb80"></div>
<div class="abs" style="left:553px;top:648.8px;font-size:9.45px;color:#222;line-height:12px">Standard Lattice</div>
<div class="abs lg" style="left:525px;top:664px;width:25px;height:15px;border:1px solid #222;background:#4ce8d8"></div>
<div class="abs" style="left:553px;top:666px;font-size:9.45px;color:#222;line-height:12px">RHB Lattice</div>
<div class="abs" style="left:537px;top:685.8px;font-size:9.45px;font-weight:bold;color:#222;line-height:12px">1</div>
<div class="abs" style="left:553px;top:685.8px;font-size:9.45px;color:#222;line-height:12px">Hybrid Fill</div>
<div class="abs" style="left:537px;top:699.8px;font-size:9.45px;font-weight:bold;color:#222;line-height:12px">4</div>
<div class="abs" style="left:553px;top:699.8px;font-size:9.45px;color:#222;line-height:12px;white-space:nowrap">324 Singlets (non Top-Up)</div>
<div class="abs lg" style="left:705px;top:644px;width:25px;height:15px;border:1px solid #222;background:#775a4a"></div>
<div class="abs" style="left:734px;top:646px;font-size:9.45px;color:#222;line-height:12px">Maintenance</div>
<div class="abs lg" style="left:705px;top:662px;width:25px;height:15px;border:1px solid #222;background:#e9694a"></div>
<div class="abs" style="left:734px;top:663px;font-size:9.45px;color:#222;line-height:12px">Machine Studies</div>
<div class="abs lg" style="left:705px;top:680px;width:25px;height:15px;border:1px solid #222;background:#ffc65e"></div>
<div class="abs" style="left:734px;top:681.4px;font-size:9.45px;color:#222;line-height:11.5px;white-space:nowrap">Machine Studies / Intervention<br>(as needed)</div>
</div>
</body>
</html>
